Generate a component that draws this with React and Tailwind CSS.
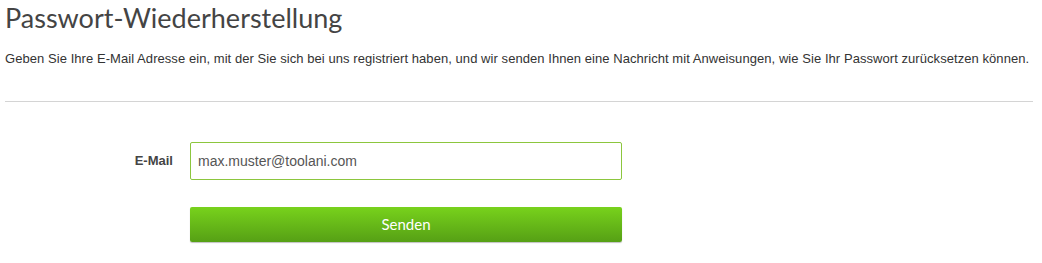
export default function App() {
  return (
    <div className="bg-white w-[1042px] h-[263px] px-[5px] text-[#333]">
      <h1 className="text-[27px] leading-[36px] text-[#444] font-['Lato','Open_Sans',sans-serif]">
        Passwort-Wiederherstellung
      </h1>
      <p className="mt-[14px] text-[13px] leading-[18px] tracking-[0.06px] font-['Liberation_Sans',Arial,sans-serif] text-[#333]">
        Geben Sie Ihre E-Mail Adresse ein, mit der Sie sich bei uns registriert haben, und wir senden Ihnen eine Nachricht mit Anweisungen, wie Sie Ihr Passwort zurücksetzen können.
      </p>
      <hr className="mt-[33px] w-[1028px] border-t border-[#d4d4d4]" />
      <form className="mt-[40px] flex flex-col gap-[27px] font-['Liberation_Sans',Arial,sans-serif]">
        <div className="flex items-start">
          <label className="w-[185px] pt-[9px] pr-[17px] text-right text-[13px] font-bold text-[#444]">E-Mail</label>
          <input
            type="text"
            defaultValue="max.muster@toolani.com"
            className="w-[432px] h-[38px] rounded-[2px] border border-[#8cc63e] px-[7px] text-[14px] text-[#555] outline-none"
          />
        </div>
        <div className="flex">
          <div className="w-[185px]" />
          <button
            type="button"
            className="w-[432px] h-[35px] rounded-[2px] bg-gradient-to-b from-[#78d21c] to-[#56a015] text-white text-[15px] font-['Lato','Open_Sans',sans-serif] shadow-[0_1px_1px_rgba(0,0,0,0.25)]"
          >
            Senden
          </button>
        </div>
      </form>
    </div>
  );
}
